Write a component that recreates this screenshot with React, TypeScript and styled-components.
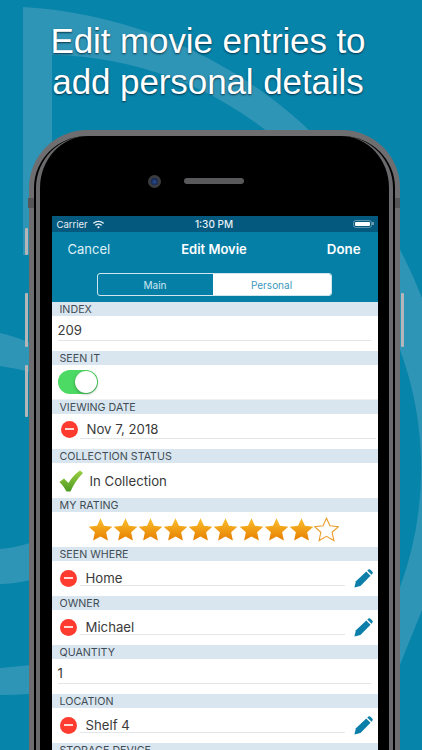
import * as React from 'react'
import styled, { createGlobalStyle } from 'styled-components'
import { FaWifi } from 'react-icons/fa'

const GlobalStyle = createGlobalStyle`
  html, body {
    margin: 0;
    padding: 0;
    background: #0784aa;
  }
`

const Page = styled.main`
  position: relative;
  width: 422px;
  height: 750px;
  overflow: hidden;
  display: flex;
  flex-direction: column;
  background: #0784aa;
  font-family: Inter, "Liberation Sans", sans-serif;
`

const Backdrop = styled.svg`
  position: absolute;
  top: 0;
  left: 0;
`

const Headline = styled.h1`
  position: relative;
  flex: none;
  box-sizing: border-box;
  height: 130px;
  margin: 0;
  padding: 20px 6px 0 0;
  font-family: "Liberation Sans", Arial, sans-serif;
  font-size: 35px;
  font-weight: 400;
  line-height: 41px;
  letter-spacing: -0.1px;
  text-align: center;
  color: #ffffff;
  text-shadow: 0 1px 2px rgba(0, 35, 55, 0.85);
`

const Phone = styled.section`
  position: relative;
  flex: none;
  box-sizing: border-box;
  width: 371px;
  margin-left: 28.5px;
  border: solid #6e6e70;
  border-width: 6px 5.5px 0;
  border-radius: 58px 58px 0 0;
  background: #000000;
  padding: 0 2px;
`

const Bezel = styled.div`
  border: solid #6a6a6c;
  border-width: 0 4px;
  border-radius: 52px 52px 0 0;
  background: #000000;
  padding: 0 10px 0 12px;
`

const SideButton = styled.span<{ $side: 'left' | 'right'; $top: number; $height: number }>`
  position: absolute;
  top: ${p => p.$top}px;
  ${p => p.$side}: -9px;
  width: 3px;
  height: ${p => p.$height}px;
  background: #b4b6b8;
  border-radius: 1px;
`

const AntennaBand = styled.span<{ $side: 'left' | 'right' }>`
  position: absolute;
  top: 62px;
  ${p => p.$side}: -5.5px;
  width: 5.5px;
  height: 10px;
  background: #565658;
`

const Earpiece = styled.div`
  box-sizing: border-box;
  height: 80px;
  padding: 10px 0 0 96px;
  display: flex;
  align-items: center;
  gap: 23px;
`

const Camera = styled.span`
  box-sizing: border-box;
  width: 13px;
  height: 13px;
  border-radius: 50%;
  border: 3px solid #3a3c40;
  background: radial-gradient(circle at 50% 55%, #2c4f96 0, #14244c 70%);
`

const Speaker = styled.span`
  width: 60px;
  height: 6px;
  border-radius: 3px;
  background: #59595b;
`

const Screen = styled.div`
  width: 326px;
  background: #ffffff;
`

const StatusBar = styled.div`
  display: grid;
  grid-template-columns: 1fr auto 1fr;
  align-items: center;
  box-sizing: border-box;
  height: 16px;
  padding: 0 6px 0 5px;
  background: #04597f;
  color: #e6f0f5;
  font-size: 9.5px;
`

const Carrier = styled.span`
  display: flex;
  align-items: center;
  gap: 5px;
`

const Clock = styled.span`
  font-weight: 500;
  font-size: 10px;
`

const Battery = styled.span`
  position: relative;
  justify-self: end;
  box-sizing: border-box;
  width: 19px;
  height: 8px;
  padding: 1px;
  border: 1px solid rgba(255, 255, 255, 0.35);
  border-radius: 3px;
  display: flex;

  &::before {
    content: '';
    flex: 1;
    background: #ffffff;
    border-radius: 1px;
  }

  &::after {
    content: '';
    position: absolute;
    top: 1px;
    right: -3px;
    width: 1.5px;
    height: 3px;
    background: rgba(255, 255, 255, 0.4);
  }
`

const NavBar = styled.header`
  background: #067fa7;
  height: 70px;
  box-sizing: border-box;
  padding-top: 9px;
`

const NavRow = styled.div`
  display: grid;
  grid-template-columns: 1fr auto 1fr;
  align-items: center;
  height: 16px;
  padding: 0 17px 0 16px;
  color: #ffffff;
`

const NavCancel = styled.span`
  color: #dff0f6;
  font-size: 13px;
`

const NavTitle = styled.span`
  font-size: 13px;
  font-weight: 600;
`

const NavDone = styled.span`
  justify-self: end;
  font-size: 13.3px;
  font-weight: 600;
`

const Segments = styled.div`
  box-sizing: border-box;
  display: flex;
  width: 235px;
  height: 23px;
  margin: 16px 0 0 45px;
  border: 1px solid #cfe6ef;
  border-radius: 3px;
  overflow: hidden;
  font-size: 10px;
`

const Segment = styled.span<{ $active?: boolean }>`
  display: flex;
  align-items: center;
  justify-content: center;
  width: ${p => (p.$active ? 118 : 115)}px;
  background: ${p => (p.$active ? '#ffffff' : 'transparent')};
  color: ${p => (p.$active ? '#3c97bb' : '#cfe8f1')};
`

const Label = styled.div`
  box-sizing: border-box;
  height: 14px;
  padding-left: 8px;
  background: #d9e6ef;
  color: #3f4b54;
  font-size: 10.7px;
  line-height: 15px;
  white-space: nowrap;
  overflow: hidden;
`

const Row = styled.div<{ $center?: boolean; $rule?: boolean }>`
  box-sizing: border-box;
  display: flex;
  height: 35px;
  align-items: ${p => (p.$center ? 'center' : 'flex-start')};
  border-bottom: ${p => (p.$rule ? '1px solid #eef1f3' : '0')};
`

const Field = styled.div<{ $top: number; $left: number; $end: number; $textLeft?: number }>`
  box-sizing: border-box;
  flex: none;
  height: 25px;
  width: ${p => p.$end - p.$left}px;
  margin-left: ${p => p.$left}px;
  padding: ${p => p.$top}px 0 0 ${p => p.$textLeft ?? 0}px;
  border-bottom: 1px solid #e3e6e8;
  color: #3a3a3a;
  font-size: 13.2px;
  line-height: 16px;
`

const Remove = styled.span<{ $top: number; $left: number }>`
  position: relative;
  flex: none;
  width: 17px;
  height: 17px;
  margin: ${p => p.$top}px 0 0 ${p => p.$left}px;
  border-radius: 50%;
  background: #ff3b30;

  &::after {
    content: '';
    position: absolute;
    left: 4px;
    right: 4px;
    top: 7.5px;
    height: 2px;
    background: #ffd9d6;
  }
`

const PencilIcon = styled.svg`
  flex: none;
  width: 19px;
  height: 19px;
  margin: 8px 0 0 9px;
  color: #0b7fa9;
`

const Toggle = styled.span`
  position: relative;
  display: block;
  box-sizing: border-box;
  width: 40px;
  height: 24px;
  margin-left: 6px;
  border-radius: 12px;
  background: #4cd964;

  &::after {
    content: '';
    position: absolute;
    top: 1px;
    right: 1px;
    width: 22px;
    height: 22px;
    border-radius: 50%;
    background: #ffffff;
    box-shadow: 0 1px 3px rgba(0, 0, 0, 0.35);
  }
`

const StatusText = styled.span`
  margin-left: 7px;
  color: #3a3a3a;
  font-size: 13.2px;
`

const CheckIcon = styled.svg`
  flex: none;
  width: 24px;
  height: 22px;
  margin-left: 7px;
`

const Stars = styled.div`
  display: flex;
  height: 35px;
  align-items: center;
  gap: 0.2px;
  padding-left: 36px;
  box-sizing: border-box;
`

const StarIcon = styled.svg`
  flex: none;
  width: 25px;
  height: 25px;
`

const STAR = '12,1.2 15.3,8.4 23.4,9.3 17.4,14.7 19.1,22.6 12,18.6 4.9,22.6 6.6,14.7 0.6,9.3 8.7,8.4'

const Star = ({ filled }: { filled: boolean }) => (
  <StarIcon viewBox="0 0 24 24">
    <polygon
      points={STAR}
      fill={filled ? 'url(#starFill)' : '#ffffff'}
      stroke={filled ? 'none' : '#e9a030'}
      strokeWidth={filled ? 0 : 1.1}
    />
  </StarIcon>
)

const Pencil = () => (
  <PencilIcon viewBox="0 0 20 20" fill="currentColor">
    <path d="M0.4 19.6 L2 13 L12.9 2.6 L17.4 7.1 L6.8 17.9 Z" />
    <path d="M14 1.6 L15.2 0.5 Q16.1 -0.1 17 0.6 L19.4 3 Q20.1 3.9 19.4 4.8 L18.4 6 Z" />
  </PencilIcon>
)

const RemovableField = ({ value }: { value: string }) => (
  <Row>
    <Remove $top={8.5} $left={8} />
    <Field $top={9} $left={3} $end={268} $textLeft={6}>{value}</Field>
    <Pencil />
  </Row>
)

const TextField = ({ value }: { value: string }) => (
  <Row>
    <Field $top={6} $left={6} $end={319}>{value}</Field>
  </Row>
)

export default function App() {
  return (
    <Page>
      <GlobalStyle />
      <Backdrop width="422" height="750" viewBox="0 0 422 750">
        <defs>
          <linearGradient id="starFill" x1="0" y1="0" x2="0" y2="1">
            <stop offset="0" stopColor="#fbc02d" />
            <stop offset="1" stopColor="#e67e00" />
          </linearGradient>
          <linearGradient id="checkFill" x1="0" y1="0" x2="0" y2="1">
            <stop offset="0" stopColor="#9ccf3f" />
            <stop offset="1" stopColor="#4c9a24" />
          </linearGradient>
        </defs>
        <g fill="#2f95b6">
          <path d="M23 7 A456 456 0 0 1 422 298 L440 298 L440 620 L422 610 L399 667 L380 667 L399 590 A344 344 0 0 0 399 347 A360 360 0 0 0 52 55 L52 255 L23 255 Z" />
          <path d="M0 333 Q14 336 30 343 L30 372 Q14 368 0 366 Z" />
          <path d="M0 549 Q14 548 30 543 L30 580 Q14 584 0 584 Z" />
          <path d="M0 668 Q14 667 30 665 L30 694 Q14 695 0 695 Z" />
        </g>
      </Backdrop>
      <Headline>
        Edit movie entries to
        <br />
        add personal details
      </Headline>
      <Phone>
        <SideButton $side="left" $top={92} $height={27} />
        <SideButton $side="left" $top={157} $height={54} />
        <SideButton $side="left" $top={229} $height={52} />
        <SideButton $side="right" $top={157} $height={54} />
        <AntennaBand $side="left" />
        <AntennaBand $side="right" />
        <Bezel>
          <Earpiece>
            <Camera />
            <Speaker />
          </Earpiece>
          <Screen>
            <StatusBar>
              <Carrier>
                Carrier
                <FaWifi size={11} />
              </Carrier>
              <Clock>1:30 PM</Clock>
              <Battery />
            </StatusBar>
            <NavBar>
              <NavRow>
                <NavCancel>Cancel</NavCancel>
                <NavTitle>Edit Movie</NavTitle>
                <NavDone>Done</NavDone>
              </NavRow>
              <Segments>
                <Segment>Main</Segment>
                <Segment $active>Personal</Segment>
              </Segments>
            </NavBar>

            <Label>INDEX</Label>
            <TextField value="209" />

            <Label>SEEN IT</Label>
            <Row $center $rule>
              <Toggle />
            </Row>

            <Label>VIEWING DATE</Label>
            <Row>
              <Remove $top={6.5} $left={9} />
              <Field $top={7} $left={2} $end={298} $textLeft={7}>Nov 7, 2018</Field>
            </Row>

            <Label>COLLECTION STATUS</Label>
            <Row $center>
              <CheckIcon viewBox="0 0 24 22">
                <path
                  d="M0.5 12 L5 8.5 L9.5 13 C12.5 8 16.5 3.5 21 0.5 L24 3 C18.5 8.5 14.5 14.5 11.5 21.5 L7.5 21.5 C5.5 18 3.5 15 0.5 12 Z"
                  fill="url(#checkFill)"
                />
              </CheckIcon>
              <StatusText>In Collection</StatusText>
            </Row>

            <Label>MY RATING</Label>
            <Stars>
              {Array.from({ length: 10 }, (_, i) => (
                <Star key={i} filled={i < 9} />
              ))}
            </Stars>

            <Label>SEEN WHERE</Label>
            <RemovableField value="Home" />

            <Label>OWNER</Label>
            <RemovableField value="Michael" />

            <Label>QUANTITY</Label>
            <TextField value="1" />

            <Label>LOCATION</Label>
            <RemovableField value="Shelf 4" />

            <Label>STORAGE DEVICE</Label>
          </Screen>
        </Bezel>
      </Phone>
    </Page>
  )
}
